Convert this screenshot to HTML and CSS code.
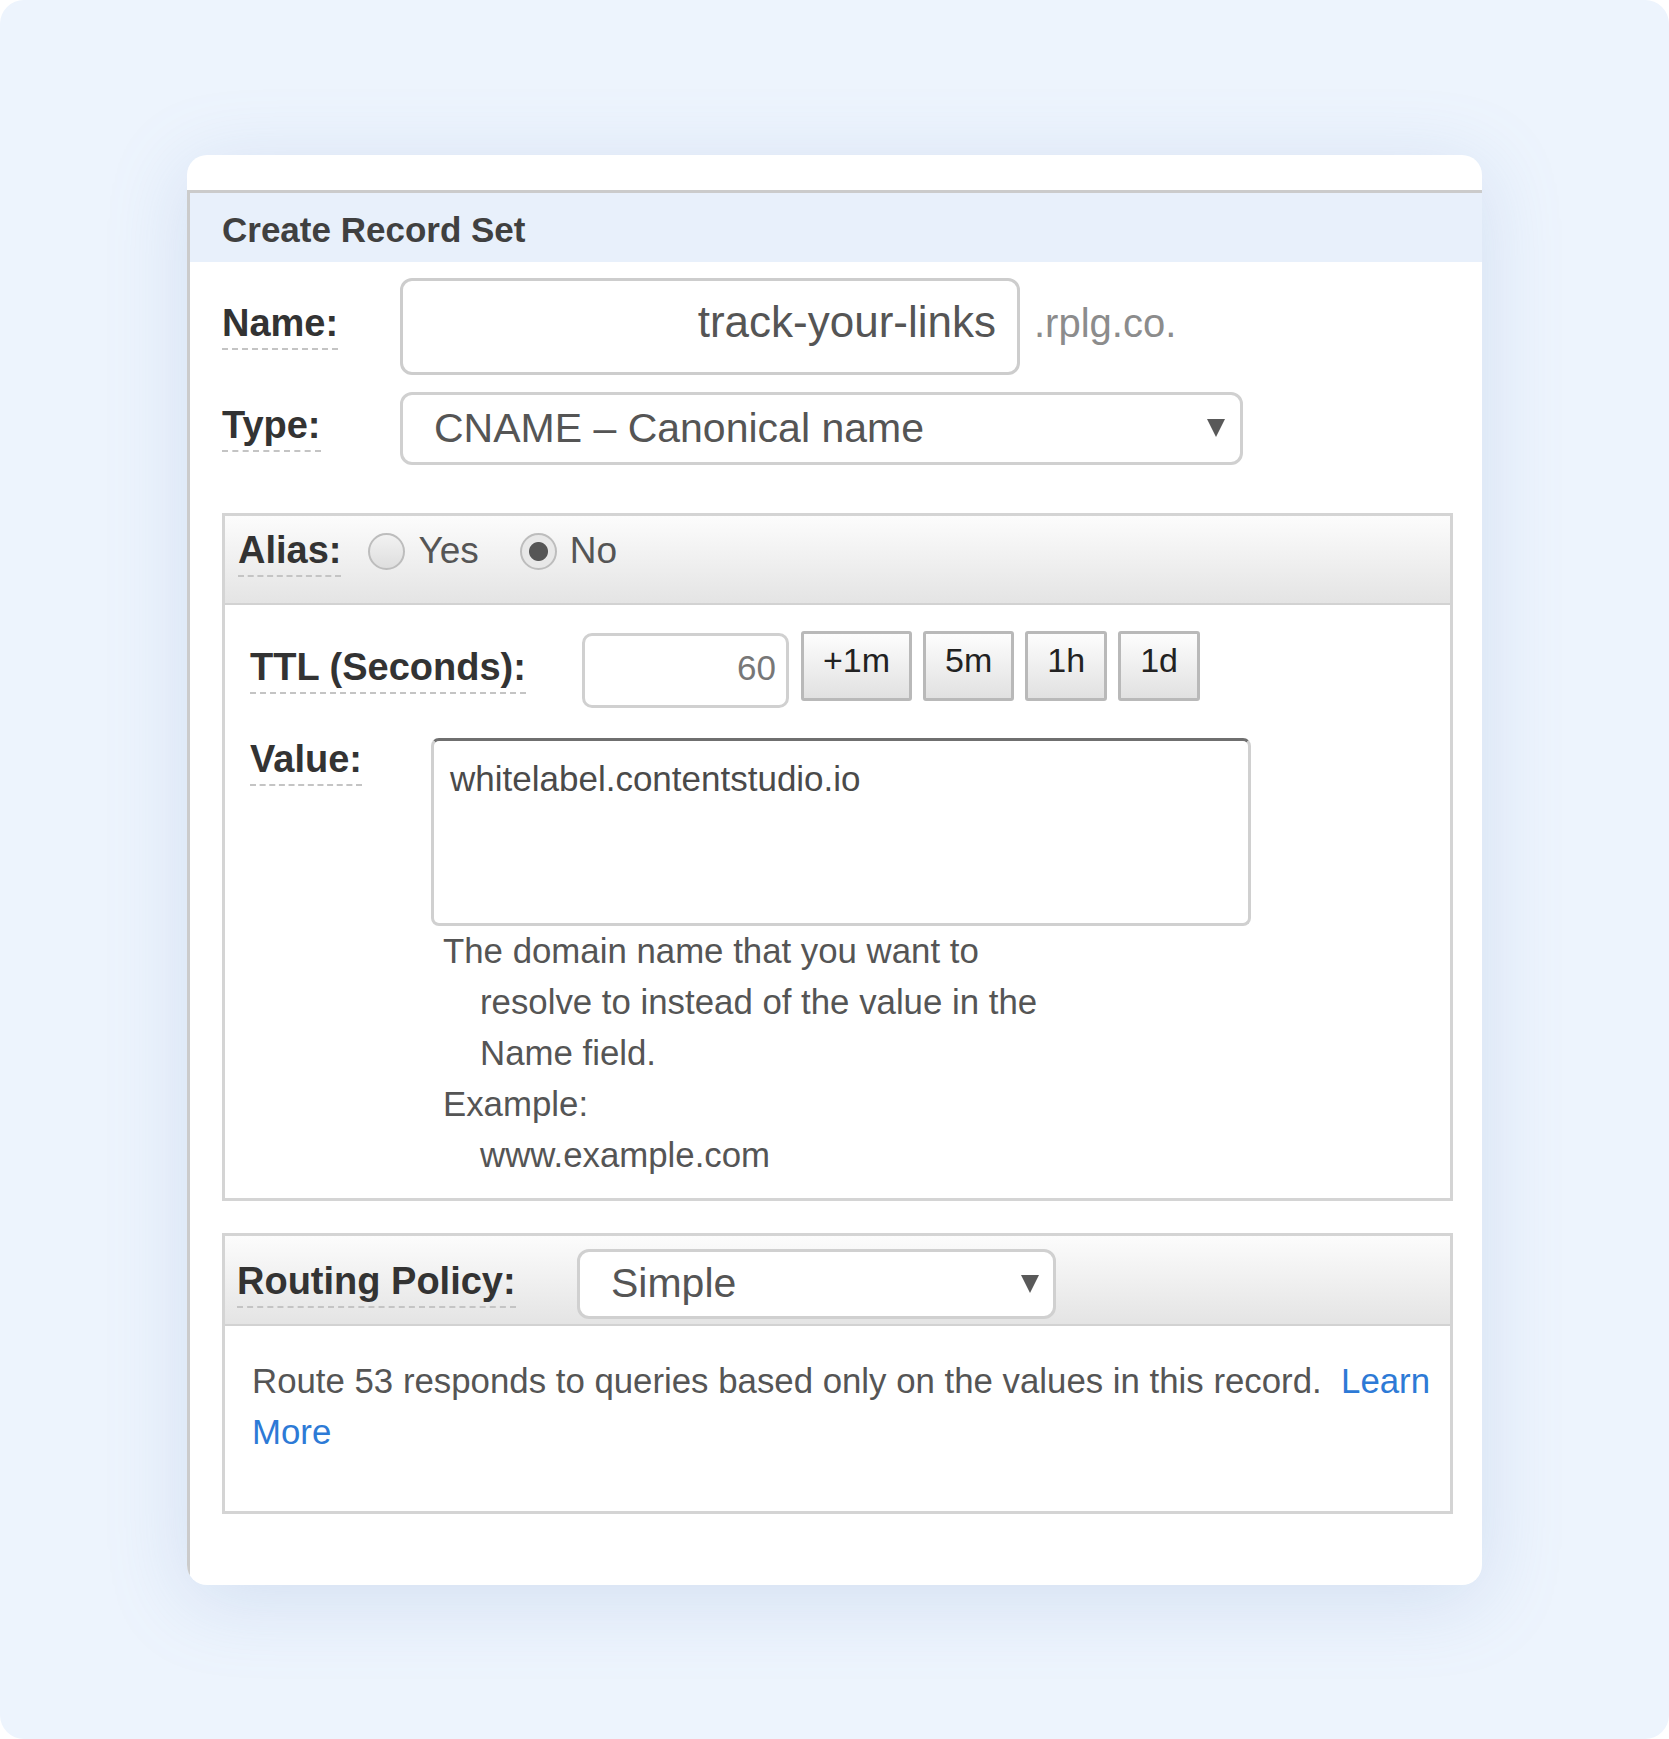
FILE: index.html
```html
<!DOCTYPE html>
<html lang="en">
  <head>
    <meta charset="utf-8">
    <title>Create Record Set</title>
    <link rel="stylesheet" href="styles.css">
  </head>
  <body>
    <div class="page">
      <div class="card">
        <div class="panel">
          <div class="panel-header">Create Record Set</div>

          <div class="panel-body">
            <div class="record-fields">
              <span class="hint">Name:</span>
              <div class="name-field">
                <input type="text" class="name-input" value="track-your-links">
                <span class="zone">.rplg.co.</span>
              </div>

              <span class="hint">Type:</span>
              <div class="select type-select">
                <span>CNAME – Canonical name</span>
                <span class="caret"></span>
              </div>
            </div>

            <div class="box alias-box">
              <div class="box-header">
                <span class="hint">Alias:</span>
                <label class="radio-option"><span class="radio"></span>Yes</label>
                <label class="radio-option"><span class="radio checked"></span>No</label>
              </div>

              <div class="alias-body">
                <div class="ttl-row">
                  <div class="label-col ttl-col"><span class="hint">TTL (Seconds):</span></div>
                  <input type="text" class="ttl-input" value="60">
                  <div class="ttl-buttons">
                    <button class="ttl-btn">+1m</button>
                    <button class="ttl-btn">5m</button>
                    <button class="ttl-btn">1h</button>
                    <button class="ttl-btn">1d</button>
                  </div>
                </div>

                <div class="value-row">
                  <div class="label-col value-col"><span class="hint">Value:</span></div>
                  <div class="value-field">
                    <textarea class="value-input">whitelabel.contentstudio.io</textarea>
                    <div class="help">
                      <p>The domain name that you want to resolve to instead of the value in the Name field.</p>
                      <p>Example:<br>www.example.com</p>
                    </div>
                  </div>
                </div>
              </div>
            </div>

            <div class="box routing-box">
              <div class="box-header routing-header">
                <div class="label-col routing-col"><span class="hint">Routing Policy:</span></div>
                <div class="select routing-select">
                  <span>Simple</span>
                  <span class="caret"></span>
                </div>
              </div>
              <p class="routing-note">
                Route 53 responds to queries based only on the values in this record.&nbsp;
                <a href="#">Learn More</a>
              </p>
            </div>
          </div>
        </div>
      </div>
    </div>
  </body>
</html>
```

FILE: styles.css
```css
body {
  margin: 0;
  background: #fff;
  font-family: "Liberation Sans", Arial, Helvetica, sans-serif;
  color: #555;
}

.page {
  height: 1739px;
  background: #edf4fd;
  border-radius: 24px;
  display: flex;
  justify-content: center;
  align-items: center;
}

.card {
  width: 1295px;
  height: 1430px;
  box-sizing: border-box;
  padding-top: 35px;
  background: #fff;
  border-radius: 20px;
  overflow: hidden;
  box-shadow: 0 14px 80px rgba(120, 150, 200, 0.22);
  display: flex;
  flex-direction: column;
}

.panel {
  flex: 1;
  border-top: 3px solid #cbcbcb;
  border-left: 3px solid #cbcbcb;
}

.panel-header {
  height: 69px;
  box-sizing: border-box;
  padding: 6px 0 0 32px;
  line-height: 61px;
  background: #e8f0fb;
  font-size: 35px;
  font-weight: bold;
  color: #404040;
}

.panel-body {
  padding: 16px 0 0 32px;
}

/* dashed underline on field labels */
.hint {
  display: inline-block;
  padding-bottom: 3px;
  border-bottom: 2px dashed #c4c4c4;
  font-size: 38px;
  font-weight: bold;
  color: #333;
  line-height: normal;
}

.label-col {
  flex: none;
}

.record-fields {
  display: grid;
  grid-template-columns: 178px auto;
  row-gap: 17px;
  align-items: center;
}

.record-fields .hint {
  justify-self: start;
}

.name-field {
  display: flex;
  align-items: baseline;
}

.name-input {
  width: 620px;
  height: 97px;
  box-sizing: border-box;
  padding: 0 21px 8px 0;
  border: 3px solid #cdcdcd;
  border-radius: 12px;
  font-family: inherit;
  font-size: 44px;
  color: #555;
  text-align: right;
  outline: none;
}

.zone {
  margin-left: 14px;
  font-size: 40px;
  color: #8c8c8c;
}

.select {
  display: flex;
  align-items: center;
  justify-content: space-between;
  box-sizing: border-box;
  border: 3px solid #d0d0d0;
  border-radius: 12px;
  background: #fff;
  font-size: 41px;
  color: #555;
}

.caret {
  width: 0;
  height: 0;
  border-left: 9px solid transparent;
  border-right: 9px solid transparent;
  border-top: 18px solid #595959;
}

.type-select {
  width: 843px;
  height: 73px;
  padding: 0 15px 0 31px;
}

.box {
  width: 1231px;
  box-sizing: border-box;
  border: 3px solid #d4d4d4;
}

.alias-box {
  margin-top: 48px;
}

.routing-box {
  margin-top: 32px;
}

.box-header {
  display: flex;
  align-items: center;
  box-sizing: border-box;
  background: linear-gradient(#fcfcfc, #e4e4e4);
  border-bottom: 2px solid #d2d2d2;
}

.alias-box .box-header {
  height: 89px;
  padding: 0 13px 16px;
}

.alias-box .box-header .hint {
  margin-top: 4px;
}

.radio-option {
  display: flex;
  align-items: center;
  gap: 13px;
  font-size: 37px;
  color: #555;
}

.radio-option:first-of-type {
  margin-left: 27px;
}

.radio-option + .radio-option {
  margin-left: 41px;
}

.radio {
  width: 37px;
  height: 37px;
  box-sizing: border-box;
  border: 2px solid #bdbdbd;
  border-radius: 50%;
  background: linear-gradient(#f2f2f2, #dedede);
}

.radio.checked {
  background: radial-gradient(circle, #565656 0 9px, #e8e8e8 10px);
}

.alias-body {
  padding: 26px 0 18px 25px;
}

.ttl-row {
  display: flex;
  align-items: center;
}

.ttl-col {
  width: 332px;
}

.ttl-input {
  width: 207px;
  height: 75px;
  box-sizing: border-box;
  padding: 0 10px 4px 0;
  border: 3px solid #d0d0d0;
  border-radius: 10px;
  font-family: inherit;
  font-size: 35px;
  color: #777;
  text-align: right;
  outline: none;
}

.ttl-buttons {
  display: flex;
  gap: 11px;
  margin-left: 12px;
  margin-bottom: 9px;
}

.ttl-btn {
  height: 70px;
  padding: 0 19px 10px;
  border: 3px solid #b9b9b9;
  border-radius: 3px;
  background: linear-gradient(#fdfdfd, #e1e1e1);
  font-family: inherit;
  font-size: 34px;
  color: #222;
  cursor: pointer;
}

.value-row {
  display: flex;
  align-items: flex-start;
  margin-top: 28px;
}

.value-col {
  width: 181px;
}

.value-input {
  display: block;
  width: 820px;
  height: 188px;
  box-sizing: border-box;
  padding: 18px 16px;
  border: 3px solid #d0d0d0;
  border-top-color: #6f6f6f;
  border-radius: 8px;
  font-family: inherit;
  font-size: 35px;
  line-height: normal;
  color: #4a4a4a;
  resize: none;
  outline: none;
}

.help {
  width: 627px;
  margin-top: -1px;
  padding-left: 12px;
  font-size: 34.8px;
  line-height: 51px;
  color: #555;
}

.help p {
  margin: 0;
  padding-left: 37px;
  text-indent: -37px;
}

.routing-header {
  padding: 13px 12px 5px;
}

.routing-col {
  width: 340px;
}

.routing-select {
  width: 479px;
  height: 70px;
  padding: 0 14px 0 31px;
}

.routing-note {
  margin: 0;
  padding: 29px 6px 54px 27px;
  font-size: 34.8px;
  line-height: 51px;
  color: #555;
}

.routing-note a {
  color: #2d7ad6;
  text-decoration: none;
}
```
